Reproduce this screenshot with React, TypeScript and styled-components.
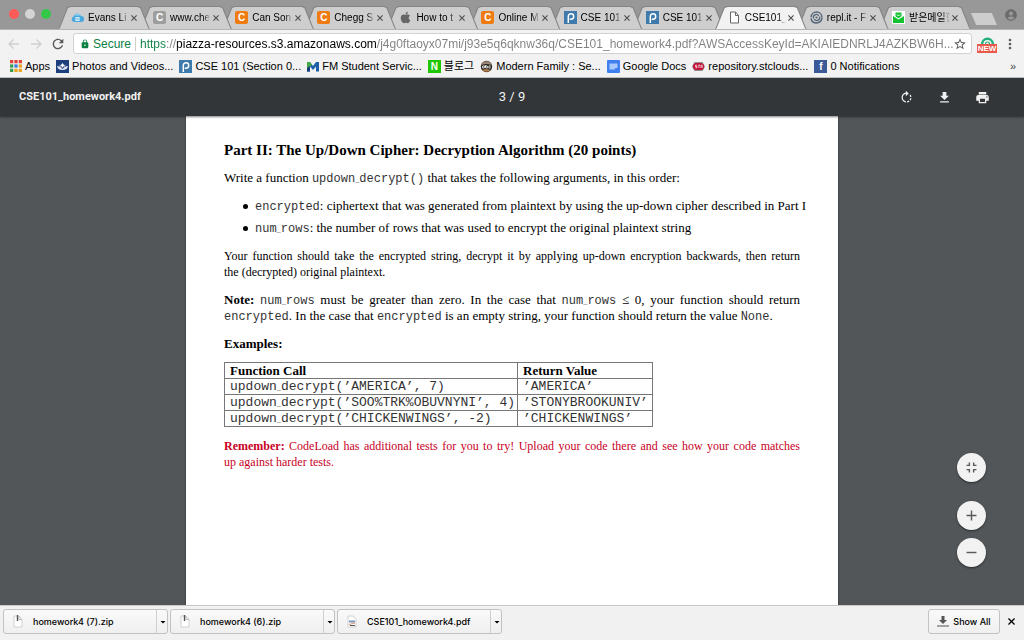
import React from "react";
import styled, { createGlobalStyle, css } from "styled-components";
import { FaApple } from "react-icons/fa";
import {
  MdAccountCircle,
  MdAdd,
  MdArrowDropDown,
  MdFileDownload,
  MdFullscreenExit,
  MdLock,
  MdMoreVert,
  MdPrint,
  MdRefresh,
  MdRemove,
  MdRotateRight,
  MdStarBorder,
} from "react-icons/md";

const ui = '"Liberation Sans", "Noto Sans CJK KR", sans-serif';
const serif = '"Liberation Serif", serif';
const mono = '"Liberation Mono", monospace';

const GlobalStyle = createGlobalStyle`
  *, *::before, *::after { box-sizing: border-box; }
  body { margin: 0; font-family: ${ui}; font-size: 11px; color: #000; }
  button { margin: 0; padding: 0; border: 0; background: none; font: inherit; color: inherit; cursor: pointer; }
  p, h1, h2, ul { margin: 0; padding: 0; }
  svg { display: block; flex: none; }
`;

const Window = styled.div`
  display: flex;
  flex-direction: column;
  height: 100vh;
  overflow: hidden;
  background: #525659;
`;

/* ---------- tab strip ---------- */

const TabStrip = styled.div`
  display: flex;
  align-items: flex-end;
  height: 30px;
  flex: none;
  background: #989898;
  border-bottom: 1px solid #b4b4b4;
`;

const Lights = styled.div`
  display: flex;
  align-items: center;
  gap: 6px;
  width: 58px;
  height: 30px;
  padding-left: 9px;
  flex: none;
`;

const Light = styled.button<{ $color: string }>`
  width: 10px;
  height: 10px;
  border-radius: 50%;
  background: ${(p) => p.$color};
`;

const Tabs = styled.div`
  display: flex;
  flex: 1;
  min-width: 0;
`;

const TabBox = styled.div<{ $active?: boolean; $order: number }>`
  position: relative;
  z-index: ${(p) => (p.$active ? 20 : p.$order)};
  display: flex;
  align-items: center;
  flex: 1 1 0;
  min-width: 0;
  height: 23px;
  padding: 0 12px 0 13px;
  gap: 4px;

  & + & {
    margin-left: -10px;
  }

  &::before,
  &::after {
    content: "";
    position: absolute;
    inset: 0;
    z-index: -1;
    background: #858585;
    clip-path: polygon(0 100%, 1px 95%, 9px 5%, 12px 0, calc(100% - 12px) 0, calc(100% - 9px) 5%, calc(100% - 1px) 95%, 100% 100%);
  }

  &::after {
    inset: 1px 1px 0;
    background: ${(p) => (p.$active ? "#f2f2f2" : "#cecece")};
  }
`;

const TabTitle = styled.button`
  flex: 1;
  min-width: 0;
  overflow: hidden;
  white-space: nowrap;
  text-align: left;
  font-size: 10px;
  line-height: 16px;
  mask-image: linear-gradient(to right, #000 80%, transparent);
`;

const CloseTab = styled.button`
  display: grid;
  place-items: center;
  width: 8px;
  height: 16px;
  margin-left: -3px;
  color: #4c4c4c;
`;

const NewTab = styled.button`
  width: 26px;
  height: 12px;
  margin: 0 1px 4px 0;
  background: #cdcdcd;
  clip-path: polygon(0 0, 80% 0, 100% 100%, 20% 100%);
`;

const Profile = styled.button`
  display: grid;
  place-items: center;
  width: 26px;
  height: 28px;
  color: #6b6b6b;
`;

/* ---------- address bar ---------- */

const AddressRow = styled.div`
  display: flex;
  align-items: center;
  height: 27px;
  flex: none;
  background: #f2f2f2;
  padding: 0 3px 0 3px;
`;

const NavButton = styled.button<{ $off?: boolean }>`
  display: grid;
  place-items: center;
  width: 22px;
  height: 22px;
  color: ${(p) => (p.$off ? "#cfcfcf" : "#5a5a5a")};
`;

const Omnibox = styled.div`
  display: flex;
  align-items: center;
  flex: 1;
  min-width: 0;
  height: 21px;
  margin: 0 5px 0 4px;
  padding: 0 3px 0 6px;
  background: #fff;
  border: 1px solid #d2d2d2;
  border-radius: 3px;
  font-size: 12px;
`;

const Secure = styled.span`
  display: flex;
  align-items: center;
  gap: 3px;
  margin-right: 4px;
  padding-right: 4px;
  border-right: 1px solid #cfcfcf;
  color: #0b8043;
  line-height: 14px;
`;

const UrlInput = styled.input`
  flex: 1;
  min-width: 0;
  margin-right: -3px;
  padding: 0;
  border: 0;
  outline: 0;
  font: 12px/16px ${ui};
  text-overflow: ellipsis;
  color: transparent;
  background: linear-gradient(to right, #0b8043 27px, #808080 27px 37px, #000 37px 237px, #808080 237px);
  background-clip: text;
`;

const Star = styled.button`
  display: grid;
  place-items: center;
  width: 16px;
  height: 16px;
  color: #5a5a5a;
`;

const Extension = styled.button`
  display: flex;
  flex-direction: column;
  align-items: center;
  width: 20px;
  margin: 2px 2px 0 0;
`;

const NewBadge = styled.span`
  width: 20px;
  background: #e8594b;
  color: #fff;
  font-size: 8px;
  font-weight: bold;
  line-height: 9px;
  text-align: center;
`;

/* ---------- bookmarks ---------- */

const Bookmarks = styled.nav`
  display: flex;
  align-items: center;
  gap: 6px;
  height: 21px;
  padding: 0 8px 2px 10px;
  flex: none;
  background: #f2f2f2;
  border-bottom: 1px solid #c4c4c4;
`;

const Bookmark = styled.a`
  display: flex;
  align-items: center;
  gap: 3px;
  color: #000;
  text-decoration: none;
  white-space: nowrap;
  line-height: 16px;
`;

const MoreBookmarks = styled.button`
  margin-left: auto;
  color: #444;
`;

const Badge = styled.span<{ $bg: string; $round?: number }>`
  display: grid;
  place-items: center;
  flex: none;
  width: 13px;
  height: 13px;
  border-radius: ${(p) => p.$round ?? 0}px;
  background: ${(p) => p.$bg};
  color: #fff;
  font-size: 10px;
  font-weight: bold;
  line-height: 13px;
`;

/* ---------- pdf viewer ---------- */

const PdfBar = styled.header`
  position: relative;
  z-index: 2;
  display: grid;
  grid-template-columns: 1fr auto 1fr;
  align-items: center;
  height: 38px;
  flex: none;
  padding: 0 19px;
  background: #323639;
  color: #f1f1f1;
  font-family: Roboto, sans-serif;
  box-shadow: 0 1px 2px rgba(0, 0, 0, 0.5);
`;

const PdfTitle = styled.h1`
  font-size: 11px;
  font-weight: 700;
  line-height: 16px;
`;

const PageCount = styled.span`
  font-size: 13px;
  line-height: 16px;
`;

const PdfTools = styled.div`
  display: flex;
  justify-content: flex-end;
  gap: 23px;
  padding-right: 15px;
`;

const Viewer = styled.main`
  position: relative;
  display: flex;
  justify-content: center;
  flex: 1;
  min-height: 0;
`;

const Page = styled.article`
  width: 100%;
  max-width: 652px;
  padding: 24px 38px;
  background: #fff;
  box-shadow: 0 0 2px #333;
  color: #000;
  font: 13px/16px ${serif};
`;

const Heading = styled.h2`
  margin-bottom: 10px;
  font-size: 15px;
  line-height: 20px;
`;

const Para = styled.p<{ $dense?: boolean; $red?: boolean }>`
  margin-bottom: 12px;
  font-size: ${(p) => (p.$dense ? 12 : 13)}px;
  color: ${(p) => (p.$red ? "#c8001e" : "inherit")};
`;

const FullLine = styled.span`
  display: block;
  text-align-last: justify;
  white-space: nowrap;
`;

const Bullets = styled.ul`
  margin-bottom: 12px;
  padding-left: 19px;
  list-style: none;
  white-space: nowrap;

  li {
    display: flex;
    align-items: center;
  }

  li::before {
    content: "";
    flex: none;
    width: 5px;
    height: 5px;
    margin-right: 7px;
    border-radius: 50%;
    background: #000;
  }

  li + li {
    margin-top: 6px;
  }
`;

const Mono = styled.code`
  font-family: ${mono};
  font-size: 12px;
  line-height: 0;
  color: #333;
`;

const Under = styled.span`
  font-size: 7px;
  line-height: 0;
`;

const Examples = styled.table`
  margin: -2px 0 11px;
  border-collapse: collapse;

  th,
  td {
    height: 16px;
    padding: 0 0 0 5px;
    border: 1px solid #777;
    line-height: 15px;
    text-align: left;
    white-space: nowrap;
  }

  th:first-child {
    width: 293px;
  }

  th:last-child {
    width: 135px;
  }

  code {
    display: block;
    font-size: 13px;
    line-height: 15px;
  }
`;

const ZoomControls = styled.div`
  position: absolute;
  right: 38px;
  bottom: 38px;
  display: flex;
  flex-direction: column;
  gap: 8px;
`;

const ZoomButton = styled.button<{ $apart?: boolean }>`
  display: grid;
  place-items: center;
  width: 29px;
  height: 29px;
  margin-bottom: ${(p) => (p.$apart ? 11 : 0)}px;
  border-radius: 50%;
  background: #f2f2f2;
  color: #5a5a5a;
  box-shadow: 0 1px 2px rgba(0, 0, 0, 0.5);
`;

/* ---------- download shelf ---------- */

const Shelf = styled.footer`
  position: relative;
  z-index: 2;
  display: flex;
  align-items: center;
  gap: 2px;
  height: 35px;
  flex: none;
  padding: 0 7px 3px 3px;
  background: #f1f1f1;
  border-top: 1px solid #c8c8c8;
  font-family: Inter, sans-serif;
  font-size: 9px;
  font-weight: 500;
`;

const shelfFrame = css`
  height: 25px;
  border: 1px solid #c2c2c2;
  border-radius: 3px;
  background: linear-gradient(#fafafa, #efefef);
`;

const Download = styled.div`
  ${shelfFrame}
  display: flex;
  width: 165px;
`;

const OpenFile = styled.button`
  display: flex;
  align-items: center;
  gap: 9px;
  flex: 1;
  min-width: 0;
  padding-left: 8px;
  white-space: nowrap;
`;

const FileMenu = styled.button`
  display: grid;
  place-items: center;
  width: 11px;
  border-left: 1px solid #d0d0d0;
`;

const ShowAll = styled.button`
  ${shelfFrame}
  display: flex;
  align-items: center;
  justify-content: center;
  gap: 4px;
  width: 72px;
  margin-left: auto;
  white-space: nowrap;
`;

const CloseShelf = styled.button`
  display: grid;
  place-items: center;
  width: 12px;
  height: 20px;
  margin-left: 3px;
`;

/* ---------- drawings ---------- */

const Cross = ({ size = 6 }: { size?: number }) => (
  <svg width={size} height={size} viewBox="0 0 6 6" fill="none" stroke="currentColor" strokeWidth="1.1">
    <path d="M.4.4l5.2 5.2M5.6.4L.4 5.6" />
  </svg>
);

const Arrow = ({ flip }: { flip?: boolean }) => (
  <svg width="12" height="12" viewBox="0 0 12 12" fill="none" stroke="currentColor" strokeWidth="1.3">
    <path d={flip ? "M1 6h10M6.5 1.5L11 6l-4.5 4.5" : "M11 6H1M5.5 1.5L1 6l4.5 4.5"} />
  </svg>
);

const Cloud = () => (
  <svg width="13" height="13" viewBox="0 0 13 13">
    <path d="M3 11a2.8 2.8 0 0 1-.4-5.4A4 4 0 0 1 10.2 5 3 3 0 0 1 10 11z" fill="#4aa9dc" />
    <path d="M3 4.5a4 4 0 0 1 7 0z" fill="#8fd0f0" />
    <path d="M4.500 6h4v4h-4z" fill="#e6f4fb" />
    <path d="M5.200 7.200h2.600M5.200 8.700h2.600" stroke="#4aa9dc" strokeWidth=".7" />
  </svg>
);

const Piazza = () => (
  <svg width="13" height="13" viewBox="0 0 13 13">
    <rect width="13" height="13" fill="#3e7aab" />
    <path
      d="M4.300 12V5.500a2.700 2.700 0 1 1 2.700 2.700c-.5 0-.9-.1-1.200-.4"
      fill="none"
      stroke="#fff"
      strokeWidth="1.500"
    />
  </svg>
);

const Sheet = () => (
  <svg width="13" height="13" viewBox="0 0 13 13" fill="#fff" stroke="#666">
    <path d="M2.500 1h5l3 3.500V12h-8z" />
    <path d="M7.500 1v3.500h3" fill="none" />
  </svg>
);

const ZipSheet = () => (
  <svg width="12" height="13" viewBox="0 0 12 13">
    <path d="M2 1h5l3 3.500V12H2z" fill="#fff" stroke="#d0d0d0" />
    <path d="M7 1v3.500h3" fill="none" stroke="#bbb" />
    <path d="M5.500 0v6" stroke="#555" strokeWidth="1.400" />
  </svg>
);

const PdfSheet = () => (
  <svg width="12" height="13" viewBox="0 0 12 13">
    <path d="M2 1h5l3 3.500V12H2z" fill="#fff" stroke="#d0d0d0" />
    <path d="M3 5.500h6v2H3z" fill="#7f93b8" />
    <path d="M3 9.500l6-1.500" stroke="#d29a72" />
    <path d="M4 10.500h5" stroke="#555" />
  </svg>
);

const Swirl = () => (
  <svg width="13" height="13" viewBox="0 0 13 13" fill="none" stroke="#56677a">
    <circle cx="6.500" cy="6.500" r="5.500" strokeWidth="1.500" strokeDasharray="16 1.300" />
    <path d="M3.500 7.500a3 3 0 0 1 5.300-2.700M9.500 5.500a3 3 0 0 1-5.300 2.700" strokeWidth="1.300" />
    <circle cx="6.500" cy="6.500" r="1.100" fill="#56677a" stroke="none" />
  </svg>
);

const Mail = () => (
  <svg width="13" height="13" viewBox="0 0 13 13">
    <rect width="13" height="13" fill="#fff" />
    <path d="M1 5l5.500 3.500L12 5v7H1z" fill="#12c22e" />
    <path d="M3.500 1.500h6v3.800l-3 2-3-2z" fill="#12c22e" />
    <path d="M5 3.500L6.500 5 8 3.500" stroke="#fff" fill="none" />
  </svg>
);

const AppsGrid = () => {
  const colors = ["#e0463a", "#e0463a", "#e0463a", "#3c9c52", "#3a80e0", "#e9a824", "#3c9c52", "#e9a824", "#e9a824"];
  return (
    <svg width="12" height="12" viewBox="0 0 11 11">
      {colors.map((c, i) => (
        <rect key={i} x={(i % 3) * 4} y={Math.floor(i / 3) * 4} width="3" height="3" fill={c} />
      ))}
    </svg>
  );
};

const Photos = () => (
  <svg width="13" height="13" viewBox="0 0 13 13">
    <rect width="13" height="13" fill="#1d3f7c" />
    <path d="M1 6c2 0 3.500.8 5.500 3C8.500 6.800 10 6 12 6c-.5 2.500-2 4-5.500 4S1.500 8.500 1 6z" fill="#dfe7f5" />
    <path d="M6.500 3l1.700 2.200-1.700 2.600-1.700-2.600zM3 4.500l1.500.7L5.500 8zM10 4.500l-1.500.7L7.500 8z" fill="#fff" />
  </svg>
);

const FmLogo = () => (
  <svg width="12" height="11" viewBox="0 0 12 11">
    <path d="M0 1h3l3 4 3-4h3v9.500H9V5.500L6 9 3 5.500v5H0z" fill="#1d5fa8" />
    <path d="M0 1h3l2 2.700L3 5.500v2H0z" fill="#4aa84a" />
    <path d="M0 7l3-2v5.500H0z" fill="#173f7c" />
  </svg>
);

const Abc = () => (
  <svg width="13" height="13" viewBox="0 0 13 13">
    <circle cx="6.500" cy="6.500" r="5.700" fill="#2d2a28" />
    <path d="M1 5.500a5.700 5.700 0 0 1 11 0C9 3.500 4 3.500 1 5.500z" fill="#9a8672" />
    <path d="M2 10a6 6 0 0 0 8.500 0c-2-1-6-1-8.500 0z" fill="#b98046" />
    <g fill="none" stroke="#fff" strokeWidth=".9">
      <circle cx="3.500" cy="7" r="1.100" />
      <circle cx="6.500" cy="7" r="1.100" />
      <path d="M10.500 6.200a1.100 1.100 0 1 0 0 1.600M5.300 5v2" />
    </g>
  </svg>
);

const Docs = () => (
  <svg width="13" height="13" viewBox="0 0 13 13">
    <rect width="13" height="13" rx="1" fill="#3f7ff0" />
    <path d="M2.500 3.500h8V8H8v1.500H2.500z" fill="#a9c8fb" />
  </svg>
);

const Stony = () => (
  <svg width="13" height="11" viewBox="0 0 13 11">
    <path d="M2.500 1h8l2.500 4.500L10.500 10h-8L0 5.500z" fill="#8f8f8f" />
    <rect x="1" y="2" width="11" height="7" rx="3.500" fill="#c5123a" />
    <path d="M5 4.200H3.500v1.300H5v1.300H3.500M6 4.200h2M7 4.200V7M9 7V4.200h1.200V7" stroke="#fff" strokeWidth=".7" fill="none" />
  </svg>
);

const Umbrella = () => (
  <svg width="13" height="7" viewBox="0 0 13 7" fill="none" stroke="#22b07c">
    <path d="M1.200 7a5.300 5.300 0 0 1 10.600 0" strokeWidth="2.400" />
    <path d="M4.500 7a2 2 0 0 1 4 0" strokeWidth="1.200" />
  </svg>
);

const ShowIcon = () => (
  <svg width="12" height="11" viewBox="0 0 12 11" fill="#555">
    <path d="M4.500 0h3v4H10L6 8 2 4h2.500zM0 9.500h12v1H0z" />
  </svg>
);

/* ---------- content ---------- */

const chegg = (
  <Badge $bg="#ef7b11" $round={2}>
    C
  </Badge>
);

const tabs: { icon: React.ReactNode; title: string; active?: boolean }[] = [
  { icon: <Cloud />, title: "Evans Li" },
  {
    icon: (
      <Badge $bg="#9d9d9d" $round={2}>
        C
      </Badge>
    ),
    title: "www.che",
  },
  { icon: chegg, title: "Can Son" },
  { icon: chegg, title: "Chegg S" },
  { icon: <FaApple size={13} color="#666" />, title: "How to t" },
  { icon: chegg, title: "Online M" },
  { icon: <Piazza />, title: "CSE 101" },
  { icon: <Piazza />, title: "CSE 101" },
  { icon: <Sheet />, title: "CSE101_", active: true },
  { icon: <Swirl />, title: "repl.it - F" },
  { icon: <Mail />, title: "받은메일함" },
];

const bookmarks = [
  { icon: <AppsGrid />, title: "Apps" },
  { icon: <Photos />, title: "Photos and Videos..." },
  { icon: <Piazza />, title: "CSE 101 (Section 0..." },
  { icon: <FmLogo />, title: "FM Student Servic..." },
  { icon: <Badge $bg="#1ec800">N</Badge>, title: "블로그" },
  { icon: <Abc />, title: "Modern Family : Se..." },
  { icon: <Docs />, title: "Google Docs" },
  { icon: <Stony />, title: "repository.stclouds..." },
  { icon: <Badge $bg="#3b5998">f</Badge>, title: "0 Notifications" },
];

const examples = [
  ["(’AMERICA’, 7)", "’AMERICA’"],
  ["(’SOO%TRK%OBUVNYNI’, 4)", "’STONYBROOKUNIV’"],
  ["(’CHICKENWINGS’, -2)", "’CHICKENWINGS’"],
];

const Snake = ({ a, b }: { a: string; b: string }) => (
  <Mono>
    {a}
    <Under>_</Under>
    {b}
  </Mono>
);

export default function App() {
  return (
    <>
      <GlobalStyle />
      <Window>
        <TabStrip>
          <Lights>
            <Light $color="#fc5b57" aria-label="Close window" />
            <Light $color="#d4d4d4" aria-label="Minimize window" />
            <Light $color="#34c748" aria-label="Zoom window" />
          </Lights>
          <Tabs>
            {tabs.map((t, i) => (
              <TabBox key={i} $active={t.active} $order={tabs.length - i}>
                {t.icon}
                <TabTitle>{t.title}</TabTitle>
                <CloseTab aria-label="Close tab">
                  <Cross />
                </CloseTab>
              </TabBox>
            ))}
          </Tabs>
          <NewTab aria-label="New tab" />
          <Profile aria-label="Profile">
            <MdAccountCircle size={14} />
          </Profile>
        </TabStrip>

        <AddressRow>
          <NavButton $off aria-label="Back">
            <Arrow />
          </NavButton>
          <NavButton $off aria-label="Forward">
            <Arrow flip />
          </NavButton>
          <NavButton aria-label="Reload">
            <MdRefresh size={16} />
          </NavButton>
          <Omnibox>
            <Secure>
              <MdLock size={10} />
              Secure
            </Secure>
            <UrlInput
              aria-label="Address"
              defaultValue="https://piazza-resources.s3.amazonaws.com/j4g0ftaoyx07mi/j93e5q6qknw36q/CSE101_homework4.pdf?AWSAccessKeyId=AKIAIEDNRLJ4AZKBW6H..."
            />
            <Star aria-label="Bookmark this page">
              <MdStarBorder size={14} />
            </Star>
          </Omnibox>
          <Extension aria-label="Extension">
            <Umbrella />
            <NewBadge>NEW</NewBadge>
          </Extension>
          <NavButton aria-label="Menu">
            <MdMoreVert size={16} />
          </NavButton>
        </AddressRow>

        <Bookmarks>
          {bookmarks.map((b) => (
            <Bookmark key={b.title} href="#">
              {b.icon}
              {b.title}
            </Bookmark>
          ))}
          <MoreBookmarks aria-label="More bookmarks">»</MoreBookmarks>
        </Bookmarks>

        <PdfBar>
          <PdfTitle>CSE101_homework4.pdf</PdfTitle>
          <PageCount>3 / 9</PageCount>
          <PdfTools>
            <button aria-label="Rotate">
              <MdRotateRight size={15} />
            </button>
            <button aria-label="Download">
              <MdFileDownload size={15} />
            </button>
            <button aria-label="Print">
              <MdPrint size={15} />
            </button>
          </PdfTools>
        </PdfBar>

        <Viewer>
          <Page>
            <Heading>Part II: The Up/Down Cipher: Decryption Algorithm (20 points)</Heading>
            <Para>
              Write a function <Snake a="updown" b="decrypt()" /> that takes the following arguments, in this order:
            </Para>
            <Bullets>
              <li>
                <span>
                  <Mono>encrypted</Mono>: ciphertext that was generated from plaintext by using the up-down cipher
                  described in Part I
                </span>
              </li>
              <li>
                <span>
                  <Snake a="num" b="rows" />: the number of rows that was used to encrypt the original plaintext string
                </span>
              </li>
            </Bullets>
            <Para $dense>
              <FullLine>
                Your function should take the encrypted string, decrypt it by applying up-down encryption backwards,
                then return
              </FullLine>
              the (decrypted) original plaintext.
            </Para>
            <Para>
              <FullLine>
                <b>Note:</b> <Snake a="num" b="rows" /> must be greater than zero. In the case that{" "}
                <Snake a="num" b="rows" /> ≤ 0, your function should return
              </FullLine>
              <Mono>encrypted</Mono>. In the case that <Mono>encrypted</Mono> is an empty string, your function should
              return the value <Mono>None</Mono>.
            </Para>
            <Para>
              <b>Examples:</b>
            </Para>
            <Examples>
              <thead>
                <tr>
                  <th>Function Call</th>
                  <th>Return Value</th>
                </tr>
              </thead>
              <tbody>
                {examples.map(([call, value]) => (
                  <tr key={value}>
                    <td>
                      <Snake a="updown" b={`decrypt${call}`} />
                    </td>
                    <td>
                      <Mono>{value}</Mono>
                    </td>
                  </tr>
                ))}
              </tbody>
            </Examples>
            <Para $dense $red>
              <FullLine>
                <b>Remember:</b> CodeLoad has additional tests for you to try! Upload your code there and see how your
                code matches
              </FullLine>
              up against harder tests.
            </Para>
          </Page>
          <ZoomControls>
            <ZoomButton $apart aria-label="Fit to page">
              <MdFullscreenExit size={17} />
            </ZoomButton>
            <ZoomButton aria-label="Zoom in">
              <MdAdd size={17} />
            </ZoomButton>
            <ZoomButton aria-label="Zoom out">
              <MdRemove size={17} />
            </ZoomButton>
          </ZoomControls>
        </Viewer>

        <Shelf>
          {["homework4 (7).zip", "homework4 (6).zip", "CSE101_homework4.pdf"].map((name) => (
            <Download key={name}>
              <OpenFile>
                {name.endsWith(".zip") ? <ZipSheet /> : <PdfSheet />}
                {name}
              </OpenFile>
              <FileMenu aria-label={`Options for ${name}`}>
                <MdArrowDropDown size={12} />
              </FileMenu>
            </Download>
          ))}
          <ShowAll>
            <ShowIcon />
            Show All
          </ShowAll>
          <CloseShelf aria-label="Close downloads bar">
            <Cross size={7} />
          </CloseShelf>
        </Shelf>
      </Window>
    </>
  );
}
